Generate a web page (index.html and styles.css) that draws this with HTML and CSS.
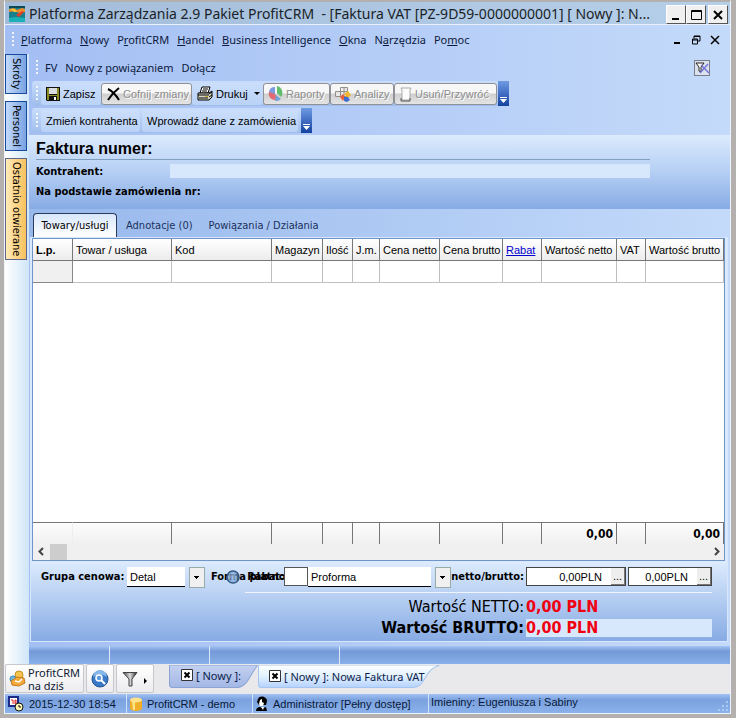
FILE: index.html
```html
<!DOCTYPE html>
<html lang="pl">
<head>
<meta charset="utf-8">
<title>Platforma Zarządzania 2.9 Pakiet ProfitCRM</title>
<link rel="stylesheet" href="styles.css">
</head>
<body>
<div class="app">
  <header class="titlebar">
    <svg class="logo" width="16" height="16" viewBox="0 0 16 16"><rect width="16" height="16" fill="#17808c"/><path d="M0 3l5-1 3 2 5-2 3 1v3l-6 1-4-2-6 1z" fill="#f08a2c"/><path d="M1 3l5 0 2 3-3 0zM11 6l3 0-2 3-3 1z" fill="#f3c331"/><path d="M7 9l6-4 2 1-5 5z" fill="#d9412d"/><path d="M0 0h16v2H0z" fill="#0c4a56"/><path d="M0 12l7-1 9 1v4H0z" fill="#1cb0b8"/></svg>
    <h1 class="title">Platforma Zarządzania 2.9 Pakiet ProfitCRM &nbsp;- [Faktura VAT [PZ-9D59-0000000001] [ Nowy ]: N...</h1>
    <div class="winbtns">
      <button aria-label="Minimalizuj"><svg width="17" height="16" viewBox="0 0 17 16"><path d="M4 12h7" stroke="#000" stroke-width="2"/></svg></button>
      <button aria-label="Maksymalizuj"><svg width="17" height="16" viewBox="0 0 17 16"><path d="M3.5 3.500h10v9h-10zM3 4.500h11" fill="none" stroke="#000"/></svg></button>
      <button class="close" aria-label="Zamknij"><svg width="17" height="16" viewBox="0 0 17 16"><path d="M4 4l8 8M12 4l-8 8" stroke="#000" stroke-width="2"/></svg></button>
    </div>
  </header>

  <nav class="menubar">
    <span class="grip"></span>
    <a href="#"><u>P</u>latforma</a><a href="#"><u>N</u>owy</a><a href="#">P<u>r</u>ofitCRM</a><a href="#"><u>H</u>andel</a><a href="#"><u>B</u>usiness Intelligence</a><a href="#"><u>O</u>kna</a><a href="#">N<u>a</u>rzędzia</a><a href="#">Po<u>m</u>oc</a>
    <div class="mdi">
      <button aria-label="Minimalizuj dokument"><svg width="10" height="10" viewBox="0 0 10 10"><path d="M2 8h6" stroke="#000" stroke-width="2"/></svg></button>
      <button aria-label="Przywróć dokument"><svg width="10" height="10" viewBox="0 0 10 10"><path d="M3 3.500V1h6v5H7M3 1.500h6M1 5h6M1.500 4v5h5V4z" fill="none" stroke="#000"/></svg></button>
      <button aria-label="Zamknij dokument"><svg width="10" height="10" viewBox="0 0 10 10"><path d="M1 1l8 8M9 1l-8 8" stroke="#000" stroke-width="1.500"/></svg></button>
    </div>
  </nav>

  <div class="work">
    <aside class="side">
      <button>Skróty</button>
      <button class="second">Personel</button>
      <button class="active">Ostatnio otwierane</button>
    </aside>

    <main class="main">
      <div class="docbar">
        <span class="grip"></span>
        <a href="#">FV</a><a href="#">Nowy z powiązaniem</a><a href="#">Dołącz</a>
        <button class="filter" aria-label="Usuń filtr"><svg width="16" height="16" viewBox="0 0 16 16"><rect x=".5" y=".5" width="15" height="15" fill="#dce1ee" stroke="#777d89"/><path d="M2 3h8L7 7v5l-2-1V7z" fill="#fff" stroke="#222"/><path d="M7 5l8 8M14 4l-8 9" stroke="#7277d8" stroke-width="1.500"/></svg></button>
      </div>

      <div class="toolbar">
        <span class="grip"></span>
        <button class="tool save"><svg width="14" height="14" viewBox="0 0 14 14"><path d="M0 0h14v14H1L0 13z" fill="#111"/><path d="M1 1h2v7h8V1h2v12h-2V9H3v4H1z" fill="#8c8c25"/><path d="M3 1h8v6H3z" fill="#d9dde0"/><path d="M4 9h6v4H4z" fill="#111"/><path d="M8 10h2v3H8z" fill="#fff"/></svg>Zapisz</button>
        <button class="tool off undo" disabled><svg width="15" height="14" viewBox="0 0 15 14"><path d="M2 2c4 2 8 6 11 11M13 1C9 4 5 8 2 13" fill="none" stroke="#000" stroke-width="2"/></svg>Cofnij zmiany</button>
        <button class="tool print"><svg width="16" height="15" viewBox="0 0 16 15"><path d="M5 1h8l-2 6H3z" fill="#fff" stroke="#000"/><path d="M6 3h5M5 5h5" stroke="#000"/><path d="M1 7h11l3-2v6l-3 3H1z" fill="#d8d8c8" stroke="#000"/><path d="M1 9h11M2 12h9M12 8l3-2M12 11l3-2" stroke="#000"/><path d="M8 10.500h3" stroke="#c7b528"/></svg>Drukuj<span class="arrow"></span></button>
        <button class="tool off report" disabled><svg width="16" height="16" viewBox="0 0 16 16"><path d="M7 8V2a6 6 0 1 0 3 11z" fill="#e06a76"/><path d="M7 8L1 6a6 6 0 0 1 6-5z" fill="#7c9be0"/><path d="M9 7V0a7 7 0 0 1 4 11z" fill="#5fbd6c"/><path d="M8 9l5 4a7 7 0 0 1-6 2z" fill="#73a3d8"/></svg>Raporty</button>
        <button class="tool off analyse" disabled><svg width="17" height="16" viewBox="0 0 17 16"><path d="M5.500 1.500h7v9h-12v-5h12M5.500 1.500v9M9 1.500v9" fill="#e9e7e4" stroke="#958d89"/><path d="M5 11l3-3 2 3-2 4z" fill="#e95e38"/><path d="M9 8l4-3 3 4-3 3z" fill="#f2b52b"/><path d="M9 11l4 0 2 3-3 2-3-1z" fill="#406fd1"/></svg>Analizy</button>
        <button class="tool off trash" disabled><svg width="14" height="16" viewBox="0 0 14 16"><path d="M2 2h10l-1 2v10H3V4z" fill="#fcfcfc" stroke="#aaa"/><path d="M2 12v3h9v-3" fill="none" stroke="#555"/></svg>Usuń/Przywróć</button>
        <button class="more" aria-label="Więcej poleceń"><svg width="7" height="6" viewBox="0 0 7 6"><path d="M0 0h7v1H0zM0 2h7L3.500 6z" fill="#fff"/></svg></button>
      </div>

      <div class="toolbar">
        <span class="grip"></span>
        <button class="tool change">Zmień kontrahenta</button>
        <button class="tool enter">Wprowadź dane z zamówienia</button>
        <button class="more" aria-label="Więcej opcji"><svg width="7" height="6" viewBox="0 0 7 6"><path d="M0 0h7v1H0zM0 2h7L3.500 6z" fill="#fff"/></svg></button>
      </div>

      <section class="invoice">
        <h2>Faktura numer:</h2>
        <div class="field"><span>Kontrahent:</span><output></output></div>
        <div class="order">Na podstawie zamówienia nr:</div>
      </section>

      <div class="tabs">
        <button class="on">Towary/usługi</button>
        <button>Adnotacje (0)</button>
        <button>Powiązania / Działania</button>
      </div>

      <section class="panel">
        <div class="gridbox">
          <table class="items">
            <colgroup><col class="c40"><col class="c99"><col class="c100"><col class="c51"><col class="c30"><col class="c27"><col class="c60"><col class="c63"><col class="c39"><col class="c75"><col class="c29"><col class="c78"></colgroup>
            <thead><tr><th class="lp">L.p.</th><th>Towar / usługa</th><th>Kod</th><th>Magazyn</th><th>Ilość</th><th>J.m.</th><th>Cena netto</th><th>Cena brutto</th><th><a href="#">Rabat</a></th><th>Wartość netto</th><th>VAT</th><th>Wartość brutto</th></tr></thead>
            <tbody><tr><td></td><td></td><td></td><td></td><td></td><td></td><td></td><td></td><td></td><td></td><td></td><td></td></tr></tbody>
          </table>
          <div class="blank"></div>
          <table class="sums">
            <colgroup><col class="c40"><col class="c99"><col class="c100"><col class="c51"><col class="c30"><col class="c27"><col class="c60"><col class="c63"><col class="c39"><col class="c75"><col class="c29"><col class="c78"></colgroup>
            <tbody><tr><td></td><td></td><td></td><td></td><td></td><td></td><td></td><td></td><td></td><td>0,00</td><td></td><td>0,00</td></tr></tbody>
          </table>
          <div class="scroll">
            <svg width="17" height="15" viewBox="0 0 17 15"><path d="M10 4L6.500 7.500L10 11" fill="none" stroke="#444" stroke-width="2"/></svg>
            <span class="thumb"></span>
            <svg class="right" width="17" height="15" viewBox="0 0 17 15"><path d="M8 4l3.500 3.500L8 11" fill="none" stroke="#444" stroke-width="2"/></svg>
          </div>
        </div>

        <form class="pay">
          <div class="row">
            <label for="group" class="lgroup">Grupa cenowa:</label>
            <span class="combo group"><select id="group"><option>Detal</option></select></span>
            <span class="stack">
              <label for="form">Forma płatności:</label>
              <svg class="dot" width="14" height="14" viewBox="0 0 14 14"><circle cx="7" cy="7" r="6" fill="#6f9cd3" fill-opacity=".6" stroke="#31567f" stroke-width="1.500"/><circle cx="7" cy="7" r="3" fill="#a7c9ec" fill-opacity=".5"/></svg>
              <label for="rabat" class="over">Rabat:</label>
            </span>
            <input id="rabat" class="rabat" type="text">
            <span class="combo form"><select id="form"><option>Proforma</option></select></span>
            <label for="net" class="clip">netto/brutto:</label>
            <span class="money net"><input id="net" type="text" value="0,00PLN"><button type="button">...</button></span>
            <span class="money gross"><input type="text" value="0,00PLN" aria-label="Brutto"><button type="button">...</button></span>
          </div>
          <div class="totals">
            <div class="total"><span>Wartość NETTO:</span><output>0,00 PLN</output></div>
            <div class="total big"><span>Wartość BRUTTO:</span><output>0,00 PLN</output></div>
          </div>
        </form>
      </section>

      <div class="segments"><span></span><span></span><span></span><span></span></div>
    </main>
  </div>

  <div class="taskbar">
    <button class="today"><svg width="17" height="17" viewBox="0 0 17 17"><circle cx="10" cy="5" r="4" fill="#f6c34c" stroke="#c38d22"/><circle cx="4" cy="9" r="3" fill="#6bbbe5" stroke="#3a87b7"/><path d="M2 11l6-4 7 1 1 5-6 3-7-1z" fill="#f5a93a" stroke="#c27a1e"/><path d="M6 11l4 1 3-3" fill="none" stroke="#fff" stroke-width="1.500"/></svg><span>ProfitCRM<br>na dziś</span></button>
    <button class="find" aria-label="Szukaj"><svg width="18" height="18" viewBox="0 0 18 18"><circle cx="9" cy="9" r="8" fill="#3979c9" stroke="#23508d"/><path d="M2 7a7 7 0 0 1 14 0c-4-3-10-3-14 0z" fill="#85b7ec"/><circle cx="8" cy="8" r="3" fill="#5d99df" stroke="#fff" stroke-width="1.500"/><path d="M10 10l4 4" stroke="#fff" stroke-width="2"/></svg></button>
    <button class="funnel" aria-label="Filtr"><svg width="26" height="16" viewBox="0 0 26 16"><defs><linearGradient id="steel"><stop offset="0" stop-color="#444"/><stop offset=".5" stop-color="#ddd"/><stop offset="1" stop-color="#222"/></linearGradient></defs><path d="M1 1.500h14L10 8v7H7V8z" fill="url(#steel)" stroke="#444"/><path d="M22 7l3 3-3 3z" fill="#000"/></svg></button>
    <button class="doc one"><svg class="shape" viewBox="0 0 89 22" preserveAspectRatio="none"><defs><linearGradient id="dull" x2="0" y2="1"><stop offset="0" stop-color="#c3d1f1"/><stop offset="1" stop-color="#a3b7e4"/></linearGradient></defs><path d="M.5 0V19Q.5 21.500 3 21.500H68C78 21.500 80 11 88 1V0z" fill="url(#dull)" stroke="#8ca4d5"/></svg><svg class="x" width="12" height="12" viewBox="0 0 12 12"><path d="M.5.5h11v11H.5z" fill="#fff" stroke="#333"/><path d="M3.500 3.500l5 5M8.500 3.500l-5 5" stroke="#000" stroke-width="2"/></svg><span>[ Nowy ]:</span></button>
    <button class="doc two"><svg class="shape" viewBox="0 0 182 22" preserveAspectRatio="none"><defs><linearGradient id="bright" x2="0" y2="1"><stop offset="0" stop-color="#fff"/><stop offset=".5" stop-color="#e2f1ff"/><stop offset="1" stop-color="#b4d2ff"/></linearGradient></defs><path d="M.5 0V19Q.5 21.500 3 21.500H155C168 21.500 166 4 181 .5V0z" fill="url(#bright)" stroke="#a6c5ee"/></svg><svg class="x" width="12" height="12" viewBox="0 0 12 12"><path d="M.5.5h11v11H.5z" fill="#fff" stroke="#333"/><path d="M3.500 3.500l5 5M8.500 3.500l-5 5" stroke="#000" stroke-width="2"/></svg><span>[ Nowy ]: Nowa Faktura VAT</span></button>
  </div>

  <footer class="status">
    <span class="date"><svg width="16" height="16" viewBox="0 0 16 16"><path d="M1 1h9v9H1z" fill="#fff" stroke="#1b2a86" stroke-width="2"/><path d="M3 4h2v4M7 4h1v4H7z" fill="none" stroke="#d22"/><circle cx="11" cy="11" r="4" fill="#fff8b8" stroke="#111"/><path d="M11 9v2h2" fill="none" stroke="#111"/></svg>2015-12-30 18:54</span>
    <span class="db"><svg width="12" height="14" viewBox="0 0 12 14"><path d="M0 3v8c0 4 12 4 12 0V3z" fill="#efad28"/><path d="M2 4h3v9H3z" fill="#ffe489"/><ellipse cx="6" cy="3" rx="6" ry="2.500" fill="#ffe28a"/></svg>ProfitCRM - demo</span>
    <span class="user"><svg width="12" height="15" viewBox="0 0 12 15"><path d="M2 3C3-1 11 0 11 5l-1 4H3L1 6z" fill="#000"/><path d="M4 4l2-1v3l2 1-1 3H4L3 8z" fill="#fff"/><path d="M0 15c0-3 2-4 4-4l3 1 3-1 1 4z" fill="#000"/><path d="M5 11l2 3 1-3z" fill="#fff"/></svg>Administrator [Pełny dostęp]</span>
    <span class="names">Imieniny: Eugeniusza i Sabiny</span>
    <svg class="size" width="12" height="12" viewBox="0 0 12 12"><path d="M8 0h2v2H8zM4 4h2v2H4zM8 4h2v2H8zM0 8h2v2H0zM4 8h2v2H4zM8 8h2v2H8z" fill="#a9c8f3"/></svg>
  </footer>
</div>
</body>
</html>
```
FILE: styles.css
```css
* { box-sizing: border-box; }
body {
  margin: 0;
  background: #b3b0ae;
  font-family: "Liberation Sans", sans-serif;
  font-size: 11px;
  color: #000;
}
button, input, select { font: inherit; color: inherit; margin: 0; padding: 0; border: 0; background: none; border-radius: 0; }
a { color: inherit; text-decoration: none; }
svg { flex: none; display: block; }

.app {
  display: flex;
  flex-direction: column;
  min-height: calc(100vh - 4px);
  margin: 0 5px 4px 4px;
  border: 1px solid #eef3fb;
  border-top-color: #b3b0ae;
  background: linear-gradient(90deg, #a3bef3, #c4dafa);
}

.titlebar {
  display: flex;
  align-items: center;
  height: 24px;
  padding: 2px 2px 0 4px;
  background: linear-gradient(90deg, #a3bcd9, #b6cfe9);
  border-top: 1px solid #b3b0ae;
  border-bottom: 1px solid #e8f1fb;
}
.title {
  flex: 1;
  min-width: 0;
  margin: 0 0 0 4px;
  font: 14px/20px "Noto Sans", sans-serif;
  color: #1a1f28;
  white-space: nowrap;
  overflow: hidden;
}
.winbtns { display: flex; }
.winbtns button {
  width: 20px;
  height: 19px;
  padding: 1px;
  background: #f0f0f0;
  border: 1px solid;
  border-color: #fff #555 #555 #fff;
}
.winbtns .close { margin-left: 2px; }

.menubar, .docbar { display: flex; align-items: center; font: 11px/16px "Noto Sans", sans-serif; color: #0c1a3c; }
.menubar { height: 29px; padding: 0 10px 0 7px; }
.menubar a { margin-right: 8px; white-space: nowrap; }
.grip {
  flex: none;
  width: 2px;
  height: 15px;
  margin-right: 7px;
  background: repeating-linear-gradient(#f2f7ff 0 2px, transparent 2px 4px);
}
.mdi { display: flex; gap: 9px; margin-left: auto; }
.mdi button { width: 10px; height: 10px; }

.work { flex: 1; display: flex; }
.side {
  display: flex;
  flex-direction: column;
  align-items: flex-start;
  flex: none;
  width: 24px;
  gap: 7px;
  background: linear-gradient(90deg, #fff, #cfe6f8);
}
.side button {
  width: 22px;
  height: 40px;
  padding: 3px 0;
  writing-mode: vertical-rl;
  text-align: left;
  font: 11px/18px "DejaVu Sans Condensed", "DejaVu Sans", sans-serif;
  border: 1px solid #164a9c;
  background: linear-gradient(90deg, #c3dafa, #7aa2e2);
  white-space: nowrap;
}
.side .second { height: 50px; }
.side .active { height: 102px; background: linear-gradient(90deg, #ffeab8, #f8c15c); border-color: #5c6688; }

.main { flex: 1; min-width: 0; display: flex; flex-direction: column; }
.docbar { height: 27px; padding: 0 20px 0 7px; }
.docbar a { margin-right: 8px; }
.filter { margin-left: auto; }

.toolbar {
  display: flex;
  align-items: center;
  align-self: flex-start;
  height: 25px;
  margin: 0 0 2px 3px;
  padding-left: 4px;
  border-radius: 3px;
  background: linear-gradient(#c9ddfb, #9fbdec);
}
.toolbar .grip { margin-right: 3px; }
.tool {
  display: flex;
  align-items: center;
  gap: 3px;
  height: 22px;
  padding: 0 5px;
  border-radius: 3px;
  background: linear-gradient(#cbdefb, #b9d2f6);
  white-space: nowrap;
}
.off {
  gap: 2px;
  padding: 0 4px;
  color: #8e8e8e;
  border: 1px solid #8f9197;
  background: linear-gradient(#f7f7f7 0 45%, #cfcfcf 50%, #e4e4e4);
  text-shadow: 1px 1px #fff;
}
.save { width: 60px; }
.undo { width: 91px; }
.print { width: 71px; }
.report { width: 67px; }
.analyse { width: 64px; }
.trash { width: 103px; }
.change { width: 99px; margin-right: 2px; }
.enter { width: 156px; margin-right: 2px; }
.arrow { margin-left: 3px; border: solid transparent; border-width: 3px 3px 0; border-top-color: #000; }
.more {
  display: flex;
  align-items: flex-end;
  justify-content: center;
  width: 11px;
  height: 25px;
  margin-left: 1px;
  padding-bottom: 3px;
  background: linear-gradient(#6f9be4, #1442a0);
}

.invoice {
  height: 74px;
  padding: 3px 80px 0 7px;
  background: linear-gradient(#dceafd, #b5cff4 50%, #87abe4);
  font: bold 11px/16px "DejaVu Sans Condensed", "DejaVu Sans", sans-serif;
}
.invoice h2 { margin: 0 0 4px; font: bold 16px/21px "Liberation Sans", sans-serif; border-bottom: 1px solid #7f9fbe; }
.field { display: flex; }
.field span { width: 134px; }
.field output { flex: 1; height: 14px; background: #d8e8fc; }
.order { margin-top: 4px; }

.tabs { display: flex; align-items: flex-end; height: 28px; padding-left: 4px; background: linear-gradient(90deg, #97b8ec, #c4dafa); }
.tabs button { height: 22px; padding: 0 4px; margin-right: 8px; font: 11px/20px "DejaVu Sans Condensed", "DejaVu Sans", sans-serif; color: #1b315c; white-space: nowrap; }
.tabs .on { width: 84px; height: 24px; margin-right: 5px; color: #000; border: 1px solid #2a3c5c; border-bottom: 0; border-radius: 4px 4px 0 0; background: linear-gradient(#d8e7fc, #fff); }

.panel {
  flex: 1;
  display: flex;
  flex-direction: column;
  margin: 0 2px 4px 1px;
  border: 1px solid #d7e6fb;
  background: linear-gradient(#dbeafd 0 325px, #87abe4);
}
.gridbox { flex: 1; display: flex; flex-direction: column; margin: 0 2px 0 1px; border: 1px solid #6f95c8; background: #fff; }
table { width: 100%; border-collapse: separate; border-spacing: 0; table-layout: fixed; }
.c40 { width: 40px; } .c99 { width: 99px; } .c100 { width: 100px; } .c51 { width: 51px; }
.c30 { width: 30px; } .c27 { width: 27px; } .c60 { width: 60px; } .c63 { width: 63px; }
.c39 { width: 39px; } .c75 { width: 75px; } .c29 { width: 29px; } .c78 { width: 78px; }
th, td { height: 22px; padding: 0 3px; border: solid #c0c0c0; border-width: 0 1px 1px 0; text-align: left; font-weight: normal; white-space: nowrap; }
th { border-color: #777; background: linear-gradient(#fff, #ececec); }
th a { color: #0000d0; text-decoration: underline; }
.lp { font-weight: bold; }
.items td:first-child { background: #f0f0f0; border-color: #888; }
.blank { flex: 1; }
.sums td { border-color: #777; border-width: 1px 1px 0 0; background: linear-gradient(#fdfdfd, #f0f0f0); text-align: right; font: bold 12px "DejaVu Sans Condensed", "DejaVu Sans", sans-serif; }
.sums td:first-child { border-right-color: #eee; }
.scroll { display: flex; height: 16px; background: #f0f0f0; }
.thumb { width: 17px; background: #cdcdcd; }
.scroll .right { margin-left: auto; }

.pay { height: 80px; padding: 6px 15px 0 10px; font: bold 11px/19px "DejaVu Sans Condensed", "DejaVu Sans", sans-serif; }
.row { display: flex; }
.lgroup { width: 86px; white-space: nowrap; }
.combo { position: relative; height: 20px; }
.combo::after {
  content: "";
  position: absolute;
  right: 0;
  top: 0;
  width: 14px;
  height: 19px;
  border: 1px solid #9aa;
  background: linear-gradient(#000, #000) 4px 8px / 5px 1px no-repeat, linear-gradient(#000, #000) 5px 9px / 3px 1px no-repeat, linear-gradient(#000, #000) 6px 10px / 1px 1px no-repeat, #f0f0f0;
  pointer-events: none;
}
.combo select { display: block; appearance: none; height: 20px; padding: 0 3px; background: #fff; border-bottom: 1px solid #000; font: 11px "Liberation Sans", sans-serif; }
.group { width: 78px; }
.group select { width: 58px; }
.form { flex: none; width: 143px; }
.form select { width: 123px; }
.stack { flex: none; position: relative; width: 73px; margin-left: 6px; overflow: hidden; white-space: nowrap; }
.dot { position: absolute; left: 15px; top: 3px; }
.over { position: absolute; right: 0; top: 0; }
.rabat { flex: none; width: 24px; height: 19px; background: #fff; border: 1px solid #555; }
.clip { flex: 1 1 0; display: flex; justify-content: flex-end; min-width: 0; margin-right: 2px; white-space: nowrap; }
.money { flex: none; display: flex; height: 19px; border: 1px solid #444; background: #fff; font: 11px "Liberation Sans", sans-serif; }
.money input { flex: 1; min-width: 0; padding-right: 9px; text-align: right; }
.money button { width: 14px; background: #eee; border: solid #777; border-width: 0 1px 1px 0; }
.net { width: 100px; margin-right: 2px; }
.gross { width: 84px; }
.totals { margin: 5px 0 0 204px; padding-top: 5px; border-top: 1px solid #eef5ff; font: 16px/18px "DejaVu Sans Condensed", "DejaVu Sans", sans-serif; }
.total { display: flex; justify-content: flex-end; margin-bottom: 3px; }
.total output { width: 186px; margin-left: 2px; font-weight: bold; color: #f00010; }
.big { font-weight: bold; }
.big output { background: #d8e8fc; }

.segments { display: flex; height: 18px; background: linear-gradient(#a5c4f3, #7399d8 30%, #8ab0e9); }
.segments span { border-right: 1px solid #dce9fc; }
.segments span:nth-child(1) { width: 81px; }
.segments span:nth-child(2) { width: 100px; }
.segments span:nth-child(3) { width: 130px; }
.segments span:nth-child(4) { flex: 1; border: 0; }

.taskbar { display: flex; height: 30px; background: #e9e9ec; font: 11px/13px "Noto Sans", sans-serif; color: #101830; }
.today, .find, .funnel { display: flex; align-items: center; justify-content: center; height: 29px; margin-right: 2px; border: 1px solid #c6c8ce; border-radius: 2px; background: linear-gradient(#fff, #ececef); }
.today { width: 79px; gap: 2px; text-align: left; white-space: nowrap; }
.find { width: 28px; }
.funnel { width: 38px; }
.doc { position: relative; display: flex; align-items: center; gap: 3px; height: 24px; color: #0d1d4a; white-space: nowrap; }
.x, .doc > span { position: relative; }
.shape { position: absolute; left: 0; top: 1px; width: 100%; height: 23px; }
.one { width: 89px; height: 22px; margin-left: 13px; padding-left: 12px; }
.two { width: 182px; padding-left: 11px; }

.status { display: flex; align-items: stretch; height: 19px; background: linear-gradient(#a2c2f2, #7ba1de 30%, #8bb2eb); color: #071838; }
.status span { display: flex; align-items: center; gap: 5px; padding-left: 3px; border-right: 1px solid #cfe0fa; white-space: nowrap; }
.date { width: 122px; }
.db { width: 126px; }
.user { width: 176px; }
.status .names { flex: 1; border: 0; padding: 0 0 3px 2px; }
.size { align-self: flex-end; }
```
